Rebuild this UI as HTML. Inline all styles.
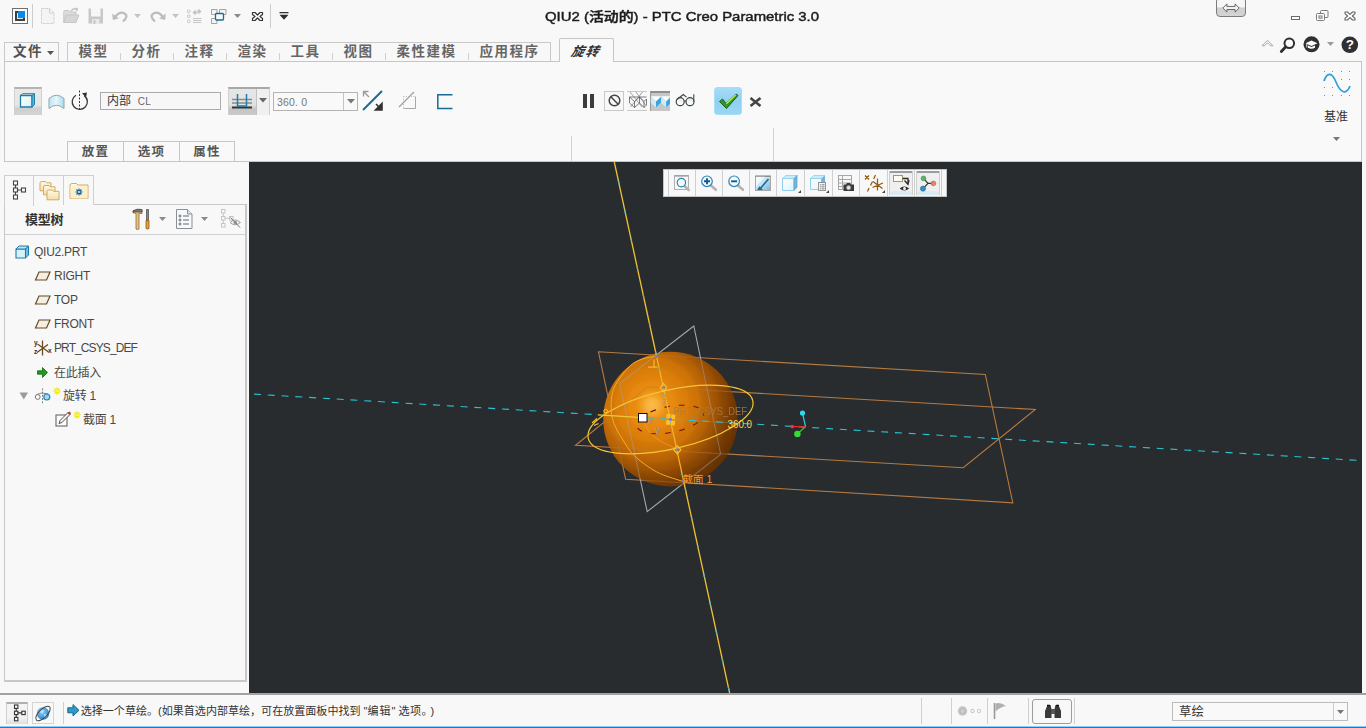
<!DOCTYPE html>
<html lang="zh-CN">
<head>
<meta charset="utf-8">
<title>QIU2 (活动的) - PTC Creo Parametric 3.0</title>
<style>
*{box-sizing:border-box;margin:0;padding:0}
html,body{width:1366px;height:728px;overflow:hidden;background:#f8f8f8;
  font-family:"Liberation Sans","Noto Sans CJK SC",sans-serif;color:#444;font-size:12px}
.abs{position:absolute}
#app{position:relative;width:1366px;height:728px;overflow:hidden;background:#f8f8f8}
svg{position:absolute;overflow:visible}
/* title */
#title{left:545px;top:8px;height:18px;line-height:18px;font-size:13px;color:#1c1c1c;white-space:nowrap;transform-origin:0 50%;transform:scaleX(1.146);-webkit-text-stroke:.45px #1c1c1c}
/* ribbon tabs */
.tabbox{top:42px;height:20px;border:1px solid #c9c9c9;border-bottom:none;background:#f8f8f8}
.tab{position:absolute;top:43px;height:19px;line-height:18px;text-align:center;font-size:13.5px;font-weight:bold;color:#666;letter-spacing:1.5px;white-space:nowrap}
.tsep{position:absolute;top:53px;width:1px;height:7px;background:#d0d0d0}
#ribbon{left:4px;top:61px;width:1358px;height:101px;border:1px solid #c6c6c6;background:#f9f9f9}
.ptab{position:absolute;top:141px;height:21px;border:1px solid #c6c6c6;background:#f9f9f9;line-height:20px;text-align:center;font-size:12.5px;font-weight:bold;color:#555;letter-spacing:1.2px}
/* viewport */
#view{left:249px;top:162px;width:1113px;height:531px;background:#282c2e;overflow:hidden}
/* left panel */
#lp{left:4px;top:204px;width:243px;height:478px;border:1px solid #c8c8c8;border-bottom:2px solid #c8c8c8;border-right:2px solid #c8c8c8;background:#f8f8f8}
.ltab{position:absolute;top:175px;height:30px;border:1px solid #cfcfcf;border-bottom:none;background:#f8f8f8}
.row{position:absolute;height:16px;line-height:16px;font-size:12px;color:#484848;white-space:nowrap;letter-spacing:-.25px}
/* status */
#sline{left:0;top:693px;width:1366px;height:2px;background:#a2a2a2}
#blue{left:0;top:726px;width:1366px;height:2px;background:linear-gradient(#8ccdf6 0,#8ccdf6 40%,#1b78de 60%,#1b78de 100%)}
</style>
</head>
<body>
<div id="app">
<!--TITLEBAR-->
<div class="abs" style="left:12px;top:8px;width:16px;height:16px;border:1px solid #6e6e6e;background:#fdfdfd"></div>
<div class="abs" style="left:15px;top:11px;width:10px;height:10px;background:#3a3f44"></div>
<div class="abs" style="left:17px;top:13px;width:6px;height:6px;background:#e8e8e8"></div>
<div class="abs" style="left:18px;top:11px;width:7px;height:7px;background:#0a8ae6"></div>
<div class="abs" style="left:32px;top:4px;width:1px;height:24px;background:#cdcdcd"></div>
<svg style="left:41px;top:8px" width="14" height="16" viewBox="0 0 14 16"><path d="M0.500 0.500h8l4.500 4.500v10.500h-12.500z" fill="#f4f4f4" stroke="#d2d2d2" stroke-dasharray="3 0.700"/><path d="M8.500 0.500v4.500h4.500" fill="none" stroke="#d2d2d2"/></svg>
<svg style="left:63px;top:7px" width="17" height="17" viewBox="0 0 17 17"><path d="M0.800 15.500V4.500q0-1 1-1h4l1.200 1.500h6v3" fill="#dcdcdc" stroke="#c6c6c6"/><path d="M0.800 15.500l2.500-7.500h12.500l-2.800 7.500z" fill="#d6d6d6" stroke="#c6c6c6"/><path d="M8 4q3-3.500 6.500-1.500" fill="none" stroke="#c2c2c2" stroke-width="1.300"/><path d="M12.500 0.300l3 1.800-2.300 2.600z" fill="#c2c2c2"/></svg>
<svg style="left:88px;top:8px" width="16" height="16" viewBox="0 0 16 16"><path d="M0.500 0.500h14.500v15h-14.500z" fill="#c8c8c8"/><path d="M3 0h9.500v8.500h-9.500z" fill="#f6f6f6"/><path d="M4 11h7.500v5h-7.500z" fill="#e9e9e9"/><path d="M5.500 12h2v4h-2z" fill="#c8c8c8"/></svg>
<svg style="left:112px;top:11px" width="16" height="12" viewBox="0 0 16 12"><path d="M3.500 5.500Q8 0 12.500 2.500T11 10.500" fill="none" stroke="#bdbdbd" stroke-width="2.200"/><path d="M0.300 2.500l0.500 6.500 6-1.500z" fill="#bdbdbd"/></svg>
<svg style="left:134px;top:14px" width="8" height="5"><path d="M0 0h7l-3.500 4z" fill="#c4c4c4"/></svg>
<svg style="left:150px;top:11px" width="16" height="12" viewBox="0 0 16 12"><path d="M12.500 5.500Q8 0 3.500 2.500T5 10.500" fill="none" stroke="#bdbdbd" stroke-width="2.200"/><path d="M15.700 2.500l-0.500 6.500-6-1.500z" fill="#bdbdbd"/></svg>
<svg style="left:172px;top:14px" width="8" height="5"><path d="M0 0h7l-3.500 4z" fill="#c4c4c4"/></svg>
<svg style="left:187px;top:8px" width="16" height="16" viewBox="0 0 16 16"><g fill="none" stroke="#c6c6c6"><rect x="0.500" y="2" width="2.600" height="2.600" rx=".8"/><rect x="0.500" y="7" width="2.600" height="2.600" rx=".8"/><rect x="0.500" y="12" width="2.600" height="2.600" rx=".8"/><path d="M6 10.500h8.500M6 12.500h8.500M6 14.500h8.500"/></g><path d="M5.500 4.500l3-3v2h2v2h-2v2zM14.500 3.500l-3-3v2h-1.500v2h1.500v2z" fill="#c2c2c2"/></svg>
<svg style="left:211px;top:9px" width="16" height="15" viewBox="0 0 16 15"><path d="M0.500 0.500h5.500v5h-5.500zM8.500 0.500h6.500v5h-6.500zM0.500 9.500h5.500v5h-5.500z" fill="#f4f4f4" stroke="#a4a4a4"/><rect x="4.500" y="4.500" width="8" height="6.500" rx="1" fill="#f4fafd" stroke="#1a6a94" stroke-width="1.300"/></svg>
<svg style="left:234px;top:14px" width="8" height="5"><path d="M0 0h7l-3.500 4z" fill="#8a8a8a"/></svg>
<svg style="left:251px;top:11px" width="13" height="11" viewBox="0 0 13 11"><path d="M1.500 1.500h2.500l2.500 2.500l2.500-2.500h2.500v2l-2.500 2l2.500 2v2h-2.500l-2.500-2.500l-2.500 2.500h-2.500v-2l2.500-2l-2.500-2z" fill="#fafafa" stroke="#333" stroke-width="1.200" stroke-linejoin="round"/></svg>
<div class="abs" style="left:270px;top:4px;width:1px;height:24px;background:#cdcdcd"></div>
<svg style="left:279px;top:12px" width="10" height="8" viewBox="0 0 10 8"><path d="M0.500 0h9v1.300h-9zM0.500 2.800h9l-4.500 5z" fill="#2e2e2e"/></svg>
<!-- window controls -->
<div class="abs" style="left:1216px;top:-3px;width:30px;height:20px;border:1px solid #7c7c7c;border-radius:4px;background:linear-gradient(#f6f6f6 0,#f6f6f6 50%,#cfcfcf 55%,#d4d4d4 100%)"></div>
<svg style="left:1221.500px;top:2.600px" width="18" height="10" viewBox="0 0 22 11" preserveAspectRatio="none"><path d="M1 5.500l5-4.500v2.800h10v-2.800l5 4.500l-5 4.500v-2.800h-10v2.800z" fill="#f2f2f2" stroke="#555" stroke-width="1"/></svg>
<div class="abs" style="left:1291px;top:16px;width:9px;height:4px;border:1px solid #6a6a6a;background:#fbfbfb"></div>
<svg style="left:1316px;top:10px" width="13" height="12" viewBox="0 0 13 12"><rect x="4.500" y="0.500" width="7.500" height="7" rx="1" fill="#fafafa" stroke="#7a7a7a"/><rect x="0.500" y="3.500" width="8" height="7" rx="1" fill="#fafafa" stroke="#7a7a7a"/><rect x="3" y="6" width="3" height="2.200" fill="none" stroke="#7a7a7a"/></svg>
<svg style="left:1344px;top:11px" width="12" height="10" viewBox="0 0 12 10"><path d="M1 1h2.500l2.500 2.300l2.500-2.300h2.500v1.600l-2.600 2.400l2.600 2.400v1.600h-2.500l-2.500-2.300l-2.500 2.300h-2.500v-1.600l2.600-2.400l-2.600-2.400z" fill="#fafafa" stroke="#666" stroke-width="1.100" stroke-linejoin="round"/></svg>
<!-- help row -->
<svg style="left:1261px;top:39px" width="13" height="8" viewBox="0 0 13 8"><path d="M1 6.800l5.500-5.500l5.500 5.500h-2.500l-3-3l-3 3z" fill="#f8f8f8" stroke="#a8a8a8" stroke-width="1"/></svg>
<svg style="left:1280px;top:37px" width="16" height="16" viewBox="0 0 16 16"><circle cx="9.300" cy="6.300" r="4.800" fill="#fafafa" stroke="#2e2e2e" stroke-width="2"/><path d="M5.800 9.800l-4.500 4.700" stroke="#2e2e2e" stroke-width="2.800" stroke-linecap="round"/></svg>
<svg style="left:1303px;top:36px" width="17" height="17" viewBox="0 0 17 17"><circle cx="8.500" cy="8.300" r="8" fill="#2e3033"/><path d="M2.500 7.200l6-2.800l6 2.800l-6 2.800z" fill="#fff"/><path d="M5 9.500v2.300q3.500 2 7 0v-2.300l-3.500 1.600z" fill="#fff"/><path d="M3.800 8v3.500" stroke="#fff" stroke-width=".9"/></svg>
<svg style="left:1327px;top:42px" width="8" height="5"><path d="M0 0h7l-3.500 4z" fill="#9a9a9a"/></svg>
<svg style="left:1341px;top:36px" width="18" height="18" viewBox="0 0 18 18"><circle cx="8.800" cy="8.800" r="8.300" fill="#2e3033"/><text x="8.800" y="13.400" text-anchor="middle" font-family="Liberation Sans,sans-serif" font-weight="bold" font-size="13.500" fill="#fff">?</text></svg>

<div id="title" class="abs">QIU2 (<span style="font-weight:500">活动的</span>) - PTC Creo Parametric 3.0</div>
<!--TABS-->
<div class="abs tabbox" style="left:4px;width:55px"></div>
<div class="tab" style="left:4px;width:55px;text-align:left;padding-left:9px;color:#505050">文件<svg style="left:43px;top:8px" width="8" height="5"><path d="M0 0h7l-3.5 4z" fill="#555"/></svg></div>
<div class="abs tabbox" style="left:67px;width:484px"></div>
<div class="tab" style="left:67px;width:53px">模型</div>
<div class="tab" style="left:120px;width:53px">分析</div>
<div class="tab" style="left:173px;width:53px">注释</div>
<div class="tab" style="left:226px;width:53px">渲染</div>
<div class="tab" style="left:279px;width:53px">工具</div>
<div class="tab" style="left:332px;width:53px">视图</div>
<div class="tab" style="left:385px;width:83px">柔性建模</div>
<div class="tab" style="left:468px;width:83px">应用程序</div>
<div class="tsep" style="left:120px"></div>
<div class="tsep" style="left:173px"></div>
<div class="tsep" style="left:226px"></div>
<div class="tsep" style="left:279px"></div>
<div class="tsep" style="left:332px"></div>
<div class="tsep" style="left:385px"></div>
<div class="tsep" style="left:468px"></div>
<div class="abs" style="left:559px;top:38px;width:55px;height:24px;border:1px solid #c6c6c6;border-bottom:none;background:#f9f9f9;border-radius:2px 2px 0 0;z-index:3"></div>
<div class="tab" style="left:558px;width:55px;top:43px;color:#333;font-style:italic;z-index:4;font-size:13px"><span style="display:inline-block;transform:skewX(-12deg)">旋转</span></div>
<!--RIBBON-->
<div id="ribbon" class="abs"></div>
<!-- pressed solid button -->
<div class="abs" style="left:14px;top:87px;width:28px;height:28px;background:linear-gradient(#e9e9e9 0,#e6e6e6 62%,#cfcfcf 75%,#d4d4d4 100%);border-top:2px solid #b4b4b4;border-left:1px solid #d0d0d0;border-right:1px solid #d0d0d0"></div>
<svg style="left:19px;top:93px" width="17" height="16" viewBox="0 0 17 16"><defs><linearGradient id="cg" x1="0" y1="0" x2="1" y2="1"><stop offset="0" stop-color="#fff"/><stop offset="1" stop-color="#d8f0fa"/></linearGradient></defs><path d="M1.5 2.5h11.5v11.5h-11.5z" fill="url(#cg)" stroke="#1c7fa8" stroke-width="1.3"/><path d="M13 2.5l2.5-1.8v11l-2.500 2.300z" fill="#5ab4dc" stroke="#1c7fa8" stroke-width="1"/><path d="M1.500 2.500l2.300-1.800h11.700" fill="none" stroke="#1c7fa8" stroke-width="1"/></svg>
<!-- surface icon -->
<svg style="left:48px;top:93px" width="17" height="17" viewBox="0 0 17 17"><defs><linearGradient id="sg" x1="0" y1="0" x2="1" y2="0"><stop offset="0" stop-color="#bfe6f6"/><stop offset="0.5" stop-color="#e4f6fc"/><stop offset="1" stop-color="#a8dcf2"/></linearGradient></defs><path d="M1 5.500Q8.500 -1 16 5.500V15.500Q8.500 9 1 15.500z" fill="url(#sg)" stroke="#8fa4ae" stroke-width="1"/></svg>
<!-- revolve icon -->
<svg style="left:70px;top:90px" width="19" height="22" viewBox="0 0 19 22"><path d="M9.500 0.500v21" stroke="#333" stroke-width="1" stroke-dasharray="2 1.500"/><path d="M6 5.200A7.600 7.600 0 1 0 14.200 5.600" fill="none" stroke="#3a3a3a" stroke-width="1.300"/><path d="M12 3.200l5-0.600-1 5z" fill="#333"/></svg>
<!-- collector -->
<div class="abs" style="left:100px;top:92px;width:121px;height:18px;border:1px solid #ababab;background:#f7f7f7"></div>
<div class="abs" style="left:107px;top:93px;height:16px;line-height:16px;font-size:12px;color:#333;white-space:nowrap">内部&nbsp; <span style="color:#666;font-size:10px;letter-spacing:.3px">CL</span></div>
<!-- depth option pressed -->
<div class="abs" style="left:228px;top:87px;width:42px;height:28px;border-top:2px solid #a8a8a8;border-left:1px solid #cfcfcf;border-right:1px solid #cfcfcf;background:#f0f0f0"></div>
<div class="abs" style="left:229px;top:89px;width:27px;height:26px;background:linear-gradient(#e6e6e6 0,#e2e2e2 60%,#c4c4c4 78%,#cbcbcb 100%)"></div>
<div class="abs" style="left:256px;top:89px;width:1px;height:26px;background:#c2c2c2"></div>
<svg style="left:231px;top:92px" width="22" height="20" viewBox="0 0 22 20"><path d="M1 7.500h20M1 11h20" stroke="#8a8a8a" stroke-width="1.300"/><path d="M1 15.500h20" stroke="#333" stroke-width="2"/><path d="M6.500 2v12h9V2" fill="none" stroke="#1c7fa8" stroke-width="1.500"/></svg>
<svg style="left:259px;top:98px" width="8" height="5"><path d="M0 0h8l-4 4.500z" fill="#666"/></svg>
<!-- angle combo -->
<div class="abs" style="left:273px;top:92px;width:85px;height:19px;border:1px solid #b4b4b4;background:#f9f9f9"></div>
<div class="abs" style="left:343px;top:93px;width:1px;height:17px;background:#c4c4c4"></div>
<div class="abs" style="left:277px;top:94px;height:16px;line-height:16px;font-size:10.500px;color:#777;white-space:nowrap;letter-spacing:.2px">360. 0</div>
<svg style="left:347px;top:99px" width="8" height="5"><path d="M0 0h8l-4 4.500z" fill="#777"/></svg>
<!-- flip -->
<svg style="left:362px;top:90px" width="21" height="21" viewBox="0 0 21 21"><path d="M1 20L20 1" stroke="#1a6a94" stroke-width="2"/><path d="M1 1.500h5.500M1.500 1v5.500M1.500 1.500l5.500 5.500" stroke="#9a9a9a" stroke-width="1.300" fill="none"/><path d="M20 20v-6.500l-6.500 6.500zM14 14l3.500 3.500" fill="#333" stroke="#333" stroke-width="1.600"/></svg>
<!-- remove material (disabled) -->
<svg style="left:398px;top:91px" width="20" height="20" viewBox="0 0 20 20"><path d="M5.500 5.500h12" stroke="#bbb" stroke-dasharray="1 1.500"/><path d="M5.500 5.500v12" stroke="#bbb" stroke-dasharray="1 1.500"/><path d="M5.500 17.500h12v-12" fill="none" stroke="#a8a8a8" stroke-width="1"/><path d="M1 16L16 1" stroke="#a0a0a0" stroke-width="1.200"/></svg>
<!-- thicken -->
<svg style="left:437px;top:94px" width="16" height="15" viewBox="0 0 16 15"><path d="M15.500 0.800h-14.700v13.600h14.700" fill="none" stroke="#1a6a94" stroke-width="1.500"/></svg>
<!-- pause -->
<div class="abs" style="left:583px;top:94px;width:4px;height:14px;background:#3c3c3c"></div>
<div class="abs" style="left:590px;top:94px;width:4px;height:14px;background:#3c3c3c"></div>
<!-- no preview -->
<div class="abs" style="left:604px;top:91px;width:20px;height:20px;border:1px solid #c9c9c9;background:#f8f8f8"></div>
<svg style="left:607.5px;top:94.200px" width="13" height="13" viewBox="0 0 13 13"><circle cx="6.500" cy="6.500" r="5.300" fill="none" stroke="#444" stroke-width="1.500"/><path d="M2.800 2.800l7.400 7.400" stroke="#444" stroke-width="1.500"/></svg>
<!-- unattached -->
<div class="abs" style="left:627px;top:91px;width:20px;height:20px;border-top:1px solid #c9c9c9;border-bottom:1px solid #c9c9c9;background:#f8f8f8"></div>
<svg style="left:627px;top:91px" width="20" height="20" viewBox="627 91 20 20"><g fill="none" stroke="#4a4a4a" stroke-width=".7"><path d="M629.500 97l5 4.500v6l-5-4.500zM634.500 101.500l5-4.500v6l-5 4.500M629.500 97h10"/><path d="M639.500 97l4.500 4.500v6l-4.500-4.500M644 101.500l2.500-2.500v6l-2.500 2.500M639.500 97h7"/></g><path d="M630 92l12 15M642.500 92l-12 15M636 92l9.500 13" stroke="#6a6a6a" stroke-width=".6" fill="none"/></svg>
<!-- attached pressed -->
<div class="abs" style="left:650px;top:91px;width:20px;height:20px;background:#c6c6c6;border-top:2px solid #8e8e8e;border-left:1px solid #9a9a9a"></div>
<svg style="left:650px;top:91px" width="20" height="20" viewBox="650 91 20 20"><path d="M650.900 96.300h10.200l-5.100 5.200z" fill="#fcfeff"/><path d="M650.900 96.700l5.100 4.800v5.800l-5.100-4.400z" fill="#cfecf8"/><path d="M656 101.500l5.100-4.400v5.500l-5.100 4.700z" fill="#38a6e0"/><path d="M661.100 96.300h9l-3.900 5.200z" fill="#fcfeff"/><path d="M661.100 96.700l5.100 4.800v5.800l-5.100-4.400z" fill="#cfecf8"/><path d="M666.200 101.500l3.800-3.300v5.500l-3.800 3.600z" fill="#38a6e0"/></svg>
<!-- glasses -->
<svg style="left:675px;top:93px" width="21" height="15" viewBox="675 93 21 15"><defs><linearGradient id="ln" x1="0" y1="0" x2="0" y2="1"><stop offset="0" stop-color="#d4ecf6"/><stop offset=".6" stop-color="#f6f8f9"/></linearGradient></defs><circle cx="680.200" cy="101.700" r="4" fill="url(#ln)" stroke="#444" stroke-width="1.200"/><circle cx="690" cy="101.700" r="4" fill="url(#ln)" stroke="#444" stroke-width="1.200"/><path d="M676.800 99.500l6.500-5l3.200 2.600M693.800 101.500v-7.300M684.200 101h1.800" fill="none" stroke="#444" stroke-width="1.100"/></svg>
<!-- ok -->
<div class="abs" style="left:714px;top:87px;width:28px;height:28px;border-radius:3px;background:linear-gradient(#a6dcf6,#8fd0f2 50%,#9ad6f4);border:1px solid #a9def7"></div>
<svg style="left:718px;top:93px" width="21" height="17" viewBox="0 0 21 17"><path d="M1.500 8.500l3-2.500 3.500 4.500L18 1l2 1.500L8.500 15.500z" fill="#2a9a2a" stroke="#1c5c1c" stroke-width="1"/><path d="M8.300 10.800L18 1.800" stroke="#c8e840" stroke-width="1.300"/></svg>
<!-- cancel x -->
<svg style="left:749px;top:97px" width="13" height="10" viewBox="0 0 13 10"><path d="M1.500 1l10 8M11.500 1l-10 8" stroke="#444" stroke-width="2.600"/></svg>
<!-- group separators -->
<div class="abs" style="left:571px;top:136px;width:1px;height:25px;background:#d2d2d2"></div>
<div class="abs" style="left:773px;top:128px;width:1px;height:33px;background:#d2d2d2"></div>
<!-- panel tabs -->
<div class="ptab" style="left:67px;width:57px">放置</div>
<div class="ptab" style="left:123px;width:57px">选项</div>
<div class="ptab" style="left:179px;width:56px">属性</div>
<!-- datum -->
<svg style="left:1323px;top:70px" width="28" height="27" viewBox="0 0 28 27"><g fill="#8a8a8a"><rect x="1" y="1" width="1" height="1"/><rect x="9" y="1" width="1" height="1"/><rect x="18" y="1" width="1" height="1"/><rect x="26" y="1" width="1" height="1"/><rect x="1" y="9" width="1" height="1"/><rect x="18" y="9" width="1" height="1"/><rect x="26" y="9" width="1" height="1"/><rect x="1" y="17" width="1" height="1"/><rect x="9" y="17" width="1" height="1"/><rect x="26" y="17" width="1" height="1"/><rect x="1" y="25" width="1" height="1"/><rect x="9" y="25" width="1" height="1"/><rect x="18" y="25" width="1" height="1"/><rect x="26" y="25" width="1" height="1"/></g><path d="M1 11C4 2 9 2 13 12S23 26 27 16" fill="none" stroke="#2f9edb" stroke-width="1.700"/></svg>
<div class="abs" style="left:1320px;top:108.500px;width:32px;height:16px;line-height:16px;font-size:12px;color:#333;text-align:center;white-space:nowrap">基准</div>
<svg style="left:1333px;top:137px" width="8" height="5"><path d="M0 0h7l-3.500 4z" fill="#777"/></svg>

<!--VIEW-->
<div id="view" class="abs">
<svg style="left:0;top:0" width="1113" height="531" viewBox="249 162 1113 531">
<defs>
<radialGradient id="sph" gradientUnits="userSpaceOnUse" cx="652" cy="405" r="92"><stop offset="0.000" stop-color="#fabc4a"/><stop offset="0.065" stop-color="#f8b23c"/><stop offset="0.098" stop-color="#f4a42a"/><stop offset="0.141" stop-color="#ee961a"/><stop offset="0.174" stop-color="#e98d11"/><stop offset="0.261" stop-color="#e6880e"/><stop offset="0.293" stop-color="#e0820b"/><stop offset="0.391" stop-color="#da7d09"/><stop offset="0.424" stop-color="#d27708"/><stop offset="0.511" stop-color="#cc7207"/><stop offset="0.543" stop-color="#c06906"/><stop offset="0.620" stop-color="#b46105"/><stop offset="0.652" stop-color="#a85904"/><stop offset="0.717" stop-color="#9c5104"/><stop offset="0.750" stop-color="#904a03"/><stop offset="0.815" stop-color="#844303"/><stop offset="0.848" stop-color="#783c02"/><stop offset="1.000" stop-color="#5e2e02"/></radialGradient>
<mask id="mk" maskUnits="userSpaceOnUse" x="249" y="162" width="1113" height="531"><rect x="249" y="162" width="1113" height="531" fill="#fff"/><circle cx="670.500" cy="419" r="67" fill="#707070"/></mask>
</defs>
<circle cx="670.500" cy="419.100" r="67.300" fill="url(#sph)"/>
<!-- datum planes -->
<g fill="none" stroke-width="1.100" mask="url(#mk)">
<path d="M598.400 351.700L985.300 374.500L1012.800 502.900L625.600 479.200Z" stroke="#b67a42"/>
<path d="M575.600 445.200L647.700 386.800L1035.300 409.500L963.200 467.700Z" stroke="#b67a42"/>
<path d="M693.800 326L720.700 454.200L647.200 511.600L619.600 383.500Z" stroke="#a4a8ae"/>
</g>
<!-- cyan dashed line -->
<path d="M254 394.100L597 414.700" stroke="#2ac4d4" stroke-width="1.100" stroke-dasharray="7 6.800" fill="none"/>
<path d="M647 417.700L738 423.200" stroke="#8a8f98" stroke-width=".7" fill="none" opacity=".5"/>
<path d="M647 417.700L1362 460.600" stroke="#2ac4d4" stroke-width="1.100" stroke-dasharray="7 6.800" fill="none"/>
<!-- dark red hidden ellipse -->
<ellipse cx="670" cy="419.500" rx="34" ry="13" transform="rotate(-11 670 419.500)" fill="none" stroke="#741212" stroke-width="1.100" stroke-dasharray="5.500 9" stroke-dashoffset="3"/>
<!-- axis -->
<path d="M614.300 162L656.500 356" stroke="#f2c230" stroke-width="1.300" fill="none"/>
<path d="M614.300 162L656.500 356" stroke="#38b8d8" stroke-width="1.300" fill="none" stroke-dasharray="3 26" stroke-dashoffset="-20"/>
<path d="M656.500 356L683.600 481" stroke="#f4b428" stroke-width="1.200" fill="none"/>
<path d="M656.500 356L683.600 481" stroke="#38c0d8" stroke-width="1.200" fill="none" stroke-dasharray="3 24" stroke-dashoffset="-12"/>
<path d="M683.600 481L729.600 693" stroke="#f2c230" stroke-width="1.300" fill="none"/>
<path d="M683.600 481L729.600 693" stroke="#38b8d8" stroke-width="1.300" fill="none" stroke-dasharray="3 26" stroke-dashoffset="-8"/>
<!-- yellow revolve curves -->
<ellipse cx="670.500" cy="419.500" rx="84.400" ry="29.400" transform="rotate(-12.900 670.500 419.500)" fill="none" stroke="#f4c634" stroke-width="1.200"/>
<path d="M656.5 356.0C653.9 356.6 645.5 357.7 641.0 359.5C636.5 361.3 633.5 362.4 629.3 366.6C625.1 370.8 618.7 379.1 615.7 384.5C612.7 389.9 612.0 393.9 611.4 399.3C610.8 404.7 611.1 411.5 612.0 416.6C612.9 421.7 615.3 426.4 617.0 430.0C618.7 433.6 619.1 434.1 622.0 438.4C624.9 442.7 628.5 450.1 634.3 455.7C640.0 461.3 648.9 467.7 656.5 471.8C664.1 475.9 675.4 479.0 680.0 480.5C684.6 482.0 683.3 480.9 684.0 481.0" fill="none" stroke="#f4ac26" stroke-width="1"/>
<path d="M644.2 422.4C645.0 423.8 647.0 428.3 649.0 431.0C651.0 433.7 653.7 436.2 656.5 438.4C659.3 440.6 662.7 442.4 666.0 444.0C669.3 445.6 674.6 447.6 676.3 448.3" fill="none" stroke="#f2a422" stroke-width=".9" opacity=".75"/>
<path d="M597.800 414.800L638.600 417.300" stroke="#f4c634" stroke-width="1.300"/>
<circle cx="605.600" cy="411" r="1.800" fill="none" stroke="#f4c634" stroke-width="1"/>
<path d="M592 423l5-4.500M594 425.500l4.500-2" stroke="#f4c634" stroke-width="1.200"/>
<!-- perpendicular symbol -->
<path d="M654 359.500v7.700M648 367.200h9.500" stroke="#f4b830" stroke-width="1.200"/>
<!-- vertex dots -->
<circle cx="656.500" cy="356.300" r="1.600" fill="#7a78e0"/>
<circle cx="683.600" cy="481" r="1.600" fill="#7a78e0"/>
<path d="M677.300 445.500l3.600 4.200l-3.600 4.200l-3.600-4.200z" fill="none" stroke="#f4c634" stroke-width="1.100"/>
<circle cx="677.300" cy="449.600" r="1.300" fill="#7a78e0"/>
<path d="M663.500 383.500l3.200 4l-3.200 4l-3.200-4z" fill="none" stroke="#f4c634" stroke-width="1.100"/>
<circle cx="663.500" cy="387.500" r="1.300" fill="#7a78e0"/>
<!-- centre marker -->
<g fill="#fac22e" transform="rotate(8 670.400 419.400)"><rect x="666" y="414.200" width="4" height="4.600"/><rect x="670.800" y="414.200" width="4" height="4.600"/><rect x="666.600" y="420.200" width="4" height="4.800"/><rect x="671.400" y="420.200" width="4" height="4.800"/></g>
<circle cx="670.400" cy="419.300" r="1.600" fill="#7a78e0"/>
<!-- csys letters -->
<g font-family="Liberation Sans,sans-serif" font-size="9" fill="#8f94b8"><text x="648" y="424">x</text><text x="655" y="432.500">y</text><text x="662" y="404">z</text></g>
<!-- labels -->
<text x="673.500" y="415" font-family="Liberation Sans,sans-serif" font-size="10.500" fill="#a87c4a" textLength="73.500" lengthAdjust="spacingAndGlyphs" opacity=".85">PRT_CSYS_DEF</text>
<text x="727.500" y="428" font-family="Liberation Sans,sans-serif" font-size="10.500" fill="#f8da48" textLength="24.500" lengthAdjust="spacingAndGlyphs">360.0</text>
<text x="682.500" y="482.500" font-family="Liberation Sans,Noto Sans CJK SC,sans-serif" font-size="10.500" fill="#f29a22">截面 1</text>
<!-- drag handle -->
<rect x="638.500" y="413.500" width="8.500" height="8.500" fill="#fff" stroke="#111" stroke-width="1"/>
<!-- spin centre -->
<path d="M805.500 426.600L802.500 413" stroke="#30d0e8" stroke-width="1.200"/>
<path d="M805.500 426.600L797.400 434" stroke="#30d030" stroke-width="1.200"/>
<path d="M805.500 426.600L792.200 426.600" stroke="#e03030" stroke-width="1.200"/>
<circle cx="802.500" cy="413" r="2.600" fill="#30d8f0"/>
<circle cx="797.400" cy="434" r="3.200" fill="#30e030"/>
<circle cx="792.200" cy="426.600" r="1.800" fill="#e83838"/>
</svg>
<!-- graphics toolbar (page coords via offset -249,-162) -->
<div class="abs" style="left:414px;top:7px;width:284px;height:28px;background:#f8f8f8;border:1px solid #c4c4c4"></div>
<svg style="left:0;top:0" width="1113" height="531" viewBox="249 162 1113 531">
<defs><linearGradient id="cb" x1="0" y1="0" x2="1" y2="1"><stop offset="0" stop-color="#ffffff"/><stop offset="1" stop-color="#dff2fb"/></linearGradient>
<linearGradient id="rp" x1="0" y1="0" x2="1" y2="1"><stop offset="0" stop-color="#eaf6fc"/><stop offset="0.5" stop-color="#bfe2f2"/><stop offset="1" stop-color="#6fb4d6"/></linearGradient></defs>
<g stroke="#cfcfcf" stroke-width="1"><path d="M668.500 170v26M695.500 170v26M722.500 170v26M749.500 170v26M776.500 170v26M804.500 170v26M832.500 170v26M859.500 170v26M887.500 170v26M914.500 170v26M941.500 170v26"/></g>
<!-- refit -->
<rect x="674.500" y="175.500" width="14" height="14" fill="#f8f8f8" stroke="#b0b0b0"/><path d="M674.500 176h14" stroke="#999" stroke-width="1.200"/>
<path d="M684.500 186l4.200 4" stroke="#b4b4b4" stroke-width="2.600" stroke-linecap="round"/><circle cx="681.400" cy="182.600" r="4.200" fill="#f2f9fd" stroke="#2a86b8" stroke-width="1.200"/>
<!-- zoom in -->
<path d="M711 185.500l4.800 4.200" stroke="#b4b4b4" stroke-width="2.800" stroke-linecap="round"/><circle cx="707" cy="181.300" r="5.300" fill="#f2f9fd" stroke="#2a86b8" stroke-width="1.200"/><path d="M704 181.300h6M707 178.300v6" stroke="#155a8a" stroke-width="1.900"/>
<!-- zoom out -->
<path d="M738.100 185.500l4.800 4.200" stroke="#b4b4b4" stroke-width="2.800" stroke-linecap="round"/><circle cx="734.100" cy="181.300" r="5.300" fill="#f2f9fd" stroke="#2a86b8" stroke-width="1.200"/><path d="M731.100 181.300h6" stroke="#155a8a" stroke-width="1.900"/>
<!-- repaint -->
<rect x="755.500" y="176" width="15" height="14.500" fill="url(#rp)" stroke="#a8a8a8"/><path d="M755.500 176.300h15" stroke="#8a8a8a" stroke-width="1.200"/><path d="M759.500 189.500l9-10.500" stroke="#1c6a98" stroke-width="1.600"/><path d="M757 190l6-0.300l-3.500-3.500z" fill="#1c6a98"/><path d="M756 176.800h9l-9 9.500z" fill="#f4fbfe" opacity=".85"/>
<!-- cube -->
<path d="M782.500 178.500h11.500v12h-11.500z" fill="url(#cb)" stroke="#8fd0ee" stroke-width="1"/><path d="M782.500 178.500l3-3h11.500l-3 3z" fill="#cdeaf7" stroke="#8fd0ee" stroke-width=".8"/><path d="M794 178.500l3-3v11.800l-3 3.200z" fill="#6fb6da" stroke="#5aa6ce" stroke-width=".8"/><path d="M801 190v3h-3z" fill="#444"/>
<!-- saved orientations -->
<path d="M810.500 178.500h11v11h-11z" fill="url(#cb)" stroke="#8fd0ee" stroke-width="1"/><path d="M810.500 178.500l3-3h11.500l-3.500 3z" fill="#cdeaf7" stroke="#8fd0ee" stroke-width=".8"/><path d="M821.500 178.500l3.500-3v8h-3.500z" fill="#6fb6da"/><rect x="818.500" y="182.500" width="7" height="8" fill="#f4f4f4" stroke="#8a8a8a" stroke-width=".9"/><path d="M820 184.800h4.500M820 186.800h4.500M820 188.800h4.500" stroke="#666" stroke-width=".8" stroke-dasharray="1 .6 3 0"/><path d="M829 190v3h-3z" fill="#444"/>
<!-- view manager -->
<g fill="none" stroke="#a6a6a6" stroke-width="1"><rect x="838.500" y="175.500" width="13" height="14" fill="#f8f8f8"/><path d="M838.500 179.500h13M838.500 183h13M838.500 186.500h13M842.500 175.500v14"/></g><path d="M843.500 184.500h2.500l1-1.500h3l1 1.500h3v6.500h-10.500z" fill="#3a3a3a"/><circle cx="848.600" cy="187.700" r="2.100" fill="#e8e8e8" stroke="#999" stroke-width=".8"/>
<!-- datum display -->
<g stroke="#915c12" stroke-width="1.250" fill="none"><path d="M865 175.500l4 4M869 175.500l-4 4M875.500 175l-1.800 4M872.500 181.500l-2 4M869 188l-1.500 3.500M877.500 178.500v12M872.500 187.500l10.500-4.500M873 181.500l9.500 7"/></g><path d="M885 190v3h-3z" fill="#444"/>
<!-- annotation display (pressed) -->
<rect x="889" y="171.500" width="24" height="23.500" fill="#efefef"/><path d="M889 172h24" stroke="#9c9c9c" stroke-width="2"/><path d="M889.500 171v24M912.500 171v24" stroke="#cfcfcf"/><path d="M890 195v-2.500l2-1.500h18l2 1.500v2.500z" fill="#dbe9f0"/>
<rect x="893.500" y="175.500" width="9" height="6" fill="#fbfbf4" stroke="#a89868" stroke-width="1"/><path d="M902.500 178.500h5.500v4.500" fill="none" stroke="#2a2a2a" stroke-width="1.300"/><path d="M904.500 180.500l3.500 3.800l1-4.300" fill="none" stroke="#2a2a2a" stroke-width="1.300"/>
<path d="M899.700 188.500q4.500-4 9.500 0q-5 4-9.500 0z" fill="#2a2a2a"/><circle cx="904.500" cy="188.500" r="1.500" fill="#f4f4f4"/>
<!-- spin centre (pressed) -->
<rect x="916" y="171.500" width="24" height="23.500" fill="#efefef"/><path d="M916 172h24" stroke="#9c9c9c" stroke-width="2"/><path d="M916.500 171v24M939.500 171v24" stroke="#cfcfcf"/><path d="M917 195v-2.500l2-1.500h18l2 1.500v2.500z" fill="#dbe9f0"/>
<path d="M923.500 178.400L928 183.400L933.400 183.400M928 183.400L923 188.600" fill="none" stroke="#333" stroke-width="1.200"/><circle cx="923.500" cy="178.400" r="2.400" fill="#5fb070" stroke="#3a8a4a" stroke-width=".6"/><circle cx="933.400" cy="183.400" r="2.400" fill="#e8806c" stroke="#c05a48" stroke-width=".6"/><circle cx="923" cy="188.600" r="2.600" fill="#3a8cc0" stroke="#1c6a98" stroke-width=".6"/>
</svg>
</div>
<!--LEFT-->
<div id="lp" class="abs"></div>
<!-- left tabs -->
<div class="ltab" style="left:33px;width:31px"></div>
<div class="ltab" style="left:63px;width:31px"></div>
<div class="ltab" style="left:4px;width:30px;height:31px;background:#f8f8f8;z-index:2"></div>
<svg style="left:12px;top:180px;z-index:3" width="15" height="20" viewBox="0 0 15 20"><g fill="#fafafa" stroke="#444" stroke-width="1.100"><rect x="1.500" y="1" width="4" height="4"/><rect x="1.500" y="8" width="4" height="4"/><rect x="1.500" y="15" width="4" height="4"/><rect x="9.500" y="8" width="4" height="4"/></g><path d="M3.500 5v3M3.500 12v3M5.500 10h4" stroke="#444" stroke-width="1.100"/></svg>
<svg style="left:39px;top:180px;z-index:3" width="21" height="21" viewBox="0 0 21 21"><defs><linearGradient id="fg" x1="0" y1="0" x2="0" y2="1"><stop offset="0" stop-color="#fef9ea"/><stop offset="1" stop-color="#f6dfa4"/></linearGradient></defs><g stroke="#c9a45a" stroke-width=".9" fill="url(#fg)"><path d="M1 3q0-1.500 1.500-1.500h4l1 1.300h4.500v8h-11z"/><path d="M4.500 7q0-1.500 1.500-1.500h4l1 1.300h5v8h-11.500z"/><path d="M8 11.500q0-1.500 1.500-1.500h4l1 1.300h5.500v8.500h-12z"/></g></svg>
<svg style="left:69px;top:182px;z-index:3" width="20" height="18" viewBox="0 0 20 18"><path d="M1 3.500q0-2 2-2h4.500l1.200 1.500h10.300v13.500h-18z" fill="url(#fg)" stroke="#c9a45a" stroke-width=".9"/><path d="M1.500 4.500h17v12h-17z" fill="#fbf0cc" stroke="none"/><path d="M10 6.500v7M6.500 10h7M7.500 7.500l5 5M12.500 7.500l-5 5" stroke="#0a5a9a" stroke-width="1.100"/><circle cx="10" cy="10" r=".9" fill="#fff"/></svg>
<!-- panel header -->
<div class="abs" style="left:5px;top:234px;width:240px;height:1px;background:#cfcfcf;z-index:2"></div>
<div class="abs" style="left:25px;top:211px;height:18px;line-height:18px;font-size:13px;font-weight:bold;color:#333;white-space:nowrap;z-index:2;letter-spacing:-.2px">模型树</div>
<svg style="left:132px;top:208px;z-index:2" width="20" height="22" viewBox="0 0 20 22"><path d="M1 3.500q4-3 9-1.500l0 3.500h-3v15.500q-1.500 1-3 0v-15.500q-1.500-.8-3-.5z" fill="#e9c27a" stroke="#8a6a3a" stroke-width=".8"/><path d="M1 2.800q4-2.600 9-1.300v2.500h-9z" fill="#777" stroke="#444" stroke-width=".7"/><path d="M14.500 1.500h2v11h-2z" fill="#888" stroke="#444" stroke-width=".7"/><path d="M14 12.500h3v8q-1.500 1-3 0z" fill="#e8a030" stroke="#8a5a1a" stroke-width=".8"/></svg>
<svg style="left:159px;top:217px;z-index:2" width="8" height="5"><path d="M0 0h7l-3.500 4z" fill="#8a8a8a"/></svg>
<svg style="left:176px;top:209px;z-index:2" width="17" height="20" viewBox="0 0 17 20"><path d="M0.500 0.500h11l4.500 4.500v14.500h-15.500z" fill="#f6fafc" stroke="#8a8f94"/><path d="M11.500 0.500v4.500h4.500" fill="#e4e8ea" stroke="#8a8f94"/><g stroke="#666" stroke-width="1" fill="none"><circle cx="4" cy="7" r="1"/><circle cx="4" cy="11" r="1"/><circle cx="4" cy="15" r="1"/><path d="M7 7h6M7 11h6M7 15h6"/></g></svg>
<svg style="left:201px;top:217px;z-index:2" width="8" height="5"><path d="M0 0h7l-3.500 4z" fill="#8a8a8a"/></svg>
<svg style="left:220px;top:209px;z-index:2" width="22" height="20" viewBox="0 0 22 20"><g fill="none" stroke="#c4c4c4"><rect x="1.500" y="0.500" width="3.500" height="3.500"/><rect x="1.500" y="7.500" width="3.500" height="3.500"/><rect x="1.500" y="14.500" width="3.500" height="3.500"/><rect x="9.500" y="7.500" width="3.500" height="3.500"/><path d="M3.300 4v3.500M3.300 11v3.500M5 9.300h4.500"/></g><path d="M10 13.500q5-5 10.500 0q-5.500 4.500-10.500 0z" fill="#eee" stroke="#999" stroke-width=".9"/><circle cx="15.300" cy="13.500" r="1.700" fill="#999"/><path d="M10.500 8.500l9.500 10" stroke="#777" stroke-width="1"/></svg>
<!-- tree -->
<svg style="left:15px;top:245px;z-index:2" width="15" height="14" viewBox="0 0 15 14"><path d="M1 4h9.500v9h-9.500z" fill="#d9f0fa" stroke="#1c7fa8" stroke-width="1.100"/><path d="M1 4l3-3h9.500l-3 3z" fill="#bfe4f4" stroke="#1c7fa8" stroke-width="1"/><path d="M10.500 4l3-3v9l-3 3z" fill="#6ebce0" stroke="#1c7fa8" stroke-width="1"/></svg>
<div class="row" style="left:34px;top:244px;z-index:2">QIU2.PRT</div>
<svg style="z-index:2;left:35px;top:271px" width="16" height="10" viewBox="0 0 16 10"><path d="M4 1h11l-3.500 8h-11z" fill="#f4efe4" stroke="#6a4a1e" stroke-width="1.200"/></svg>
<div class="row" style="left:54px;top:268px;z-index:2">RIGHT</div>
<svg style="z-index:2;left:35px;top:295px" width="16" height="10" viewBox="0 0 16 10"><path d="M4 1h11l-3.500 8h-11z" fill="#f4efe4" stroke="#6a4a1e" stroke-width="1.200"/></svg>
<div class="row" style="left:54px;top:292px;z-index:2">TOP</div>
<svg style="z-index:2;left:35px;top:319px" width="16" height="10" viewBox="0 0 16 10"><path d="M4 1h11l-3.500 8h-11z" fill="#f4efe4" stroke="#6a4a1e" stroke-width="1.200"/></svg>
<div class="row" style="left:54px;top:316px;z-index:2">FRONT</div>
<svg style="left:34px;top:339px;z-index:2" width="18" height="18" viewBox="0 0 18 18"><path d="M8.500 1.500v15M3 13.500l11-8M3.500 5l11 8" stroke="#6a4a1e" stroke-width="1.300"/><text x="0" y="6" font-size="6.500" font-family="Liberation Sans,sans-serif" font-weight="bold" fill="#333">y</text><text x="0" y="15" font-size="6.500" font-family="Liberation Sans,sans-serif" font-weight="bold" fill="#333">z</text><text x="14" y="14" font-size="6.500" font-family="Liberation Sans,sans-serif" font-weight="bold" fill="#333">x</text></svg>
<div class="row" style="left:54px;top:340px;z-index:2;letter-spacing:-.9px">PRT_CSYS_DEF</div>
<svg style="left:37px;top:366.500px;z-index:2" width="11" height="11" viewBox="0 0 11 11"><path d="M0.500 3.800h5v-3.300l5 5l-5 5v-3.300h-5z" fill="#1f9a1f" stroke="#0f6a0f" stroke-width=".8"/></svg>
<div class="row" style="left:54px;top:365px;z-index:2">在此插入</div>
<svg style="left:19px;top:392px;z-index:2" width="10" height="8"><path d="M0.500 0.500h8.500l-4.200 7z" fill="#9a9a9a"/></svg>
<svg style="left:34px;top:388px;z-index:2" width="17" height="16" viewBox="34 388 17 16"><path d="M42.500 388.400v15.200" stroke="#666" stroke-width=".8" stroke-dasharray="2 1.200"/><circle cx="37.700" cy="397" r="2.400" fill="#fafcfd" stroke="#777" stroke-width="1"/><circle cx="46.800" cy="397" r="3" fill="#9fd8f0" stroke="#2a86b0" stroke-width="1.200"/><path d="M36.500 394.600q5-3 11.500-0.600" fill="none" stroke="#777" stroke-width=".9"/></svg>
<svg style="z-index:2;left:53px;top:387px" width="8" height="8" viewBox="0 0 8 8"><path d="M4 0.300v7.400M0.300 4h7.400M1.400 1.400l5.200 5.200M6.600 1.400l-5.200 5.200" stroke="#f2e600" stroke-width="1.200"/><circle cx="4" cy="4" r="1.200" fill="#fff84a"/></svg>
<div class="row" style="left:63px;top:388px;z-index:2">旋转 1</div>
<svg style="left:55px;top:411px;z-index:2" width="17" height="16" viewBox="0 0 17 16"><rect x="1" y="4" width="11" height="11" fill="#fdfdfd" stroke="#666" stroke-width="1.100"/><path d="M4 12.500l1-3l8.500-8.500l2 2l-8.500 8.500z" fill="#f0f0f0" stroke="#444" stroke-width=".9"/><path d="M12.500 2l2-1.500l1.500 1.500l-1.500 2z" fill="#d03030"/></svg>
<svg style="z-index:2;left:73px;top:411px" width="8" height="8" viewBox="0 0 8 8"><path d="M4 0.300v7.400M0.300 4h7.400M1.400 1.400l5.200 5.200M6.600 1.400l-5.200 5.200" stroke="#f2e600" stroke-width="1.200"/><circle cx="4" cy="4" r="1.200" fill="#fff84a"/></svg>
<div class="row" style="left:83px;top:412px;z-index:2">截面 1</div>

<!--STATUS-->
<div class="abs" style="left:6px;top:702px;width:22px;height:22px;border-top:2px solid #b0b0b0;border-left:1px solid #d0d0d0;border-right:1px solid #d0d0d0;background:linear-gradient(#f4f4f4 0,#f2f2f2 70%,#dedede 100%)"></div>
<svg style="left:13px;top:704px" width="14" height="18" viewBox="0 0 14 18"><g fill="#fafafa" stroke="#333" stroke-width="1.100"><rect x="1.500" y="1" width="3.400" height="3.400"/><rect x="1.500" y="7.200" width="3.400" height="3.400"/><rect x="1.500" y="13.400" width="3.400" height="3.400"/><rect x="8.800" y="7.200" width="3.400" height="3.400"/></g><path d="M3.200 4.400v2.800M3.200 10.600v2.800M4.900 8.900h3.900" stroke="#333" stroke-width="1.100"/></svg>
<div class="abs" style="left:32px;top:702px;width:22px;height:22px;border:1px solid #d4d4d4;background:#f8f8f8"></div>
<svg style="left:34px;top:704px" width="18" height="18" viewBox="0 0 18 18"><defs><radialGradient id="gl" cx=".4" cy=".35" r=".7"><stop offset="0" stop-color="#8fd0f4"/><stop offset="1" stop-color="#1f80c8"/></radialGradient></defs><circle cx="9" cy="9.500" r="6.200" fill="url(#gl)"/><path d="M6 6q2-1.500 3.500 0t-1 3.500q-2.500.5-2.500-3.500zM10 10q2.500-1 3 1t-2 3q-1.500-1-1-4z" fill="#bfe6fa" opacity=".8"/><ellipse cx="9" cy="9.500" rx="9.300" ry="4.200" transform="rotate(-45 9 9.500)" fill="none" stroke="#444" stroke-width="1"/></svg>
<div class="abs" style="left:63px;top:702px;width:1px;height:22px;background:#cfcfcf"></div>
<svg style="left:67px;top:704px" width="13" height="13" viewBox="0 0 13 13"><path d="M0.800 3.800h5.200v-3.200l6 5.700l-6 5.700v-3.200h-5.200z" fill="#2a9ac8" stroke="#17678c" stroke-width="1"/></svg>
<div class="abs" style="left:80.700px;top:702.500px;height:16px;line-height:16px;font-size:11.050px;color:#333;white-space:nowrap;letter-spacing:0">选择一个草绘。(如果首选内部草绘，可在放置面板中找到 "<span style="letter-spacing:.9px">编辑</span>" <span style="letter-spacing:.5px">选项</span><span style="letter-spacing:3.500px">。</span>)</div>
<!-- right status -->
<div class="abs" style="left:921px;top:698px;width:1px;height:26px;background:#d0d0d0"></div>
<div class="abs" style="left:951px;top:698px;width:1px;height:26px;background:#d0d0d0"></div>
<div class="abs" style="left:987px;top:698px;width:1px;height:26px;background:#d0d0d0"></div>
<div class="abs" style="left:1028px;top:698px;width:1px;height:26px;background:#d0d0d0"></div>
<div class="abs" style="left:1074px;top:698px;width:1px;height:26px;background:#d0d0d0"></div>
<svg style="left:957px;top:705px" width="26" height="12" viewBox="0 0 26 12"><circle cx="5.500" cy="6" r="4.700" fill="#c4c4c4"/><circle cx="5.500" cy="6" r="2.500" fill="#cfcfcf" stroke="#b8b8b8"/><rect x="14" y="4.500" width="3" height="3" rx=".8" fill="none" stroke="#c0c0c0"/><rect x="20.500" y="4.500" width="3" height="3" rx=".8" fill="none" stroke="#c0c0c0"/></svg>
<svg style="left:993px;top:702px" width="14" height="18" viewBox="0 0 14 18"><path d="M1.500 1v16" stroke="#9a9a9a" stroke-width="1.600"/><path d="M2.500 1.500q5-1.500 10.500 2.500q-5 .5-10.500 5.500z" fill="#b0b0b0"/></svg>
<div class="abs" style="left:1032px;top:699px;width:40px;height:25px;border:1px solid #9c9c9c;border-radius:3px;background:#f8f8f8"></div>
<svg style="left:1044px;top:703px" width="18" height="16" viewBox="0 0 18 16"><path d="M1 15v-7l2.500-6h3l1 4v9zM17 15v-7l-2.500-6h-3l-1 4v9z" fill="#3a3a3a"/><path d="M7 6h4v5h-4z" fill="#555"/><path d="M3 2.500h3M12 2.500h3" stroke="#111" stroke-width="1.500"/></svg>
<div class="abs" style="left:1172px;top:702px;width:176px;height:19px;border:1px solid #bcbcbc;background:#f9f9f9"></div>
<div class="abs" style="left:1333px;top:703px;width:1px;height:17px;background:#cacaca"></div>
<div class="abs" style="left:1179px;top:704px;height:16px;line-height:16px;font-size:12.400px;color:#333;white-space:nowrap">草绘</div>
<svg style="left:1337px;top:710px" width="8" height="5"><path d="M0 0h7l-3.500 4z" fill="#777"/></svg>

<div id="sline" class="abs"></div>
<div id="blue" class="abs"></div>
</div>
</body>
</html>
